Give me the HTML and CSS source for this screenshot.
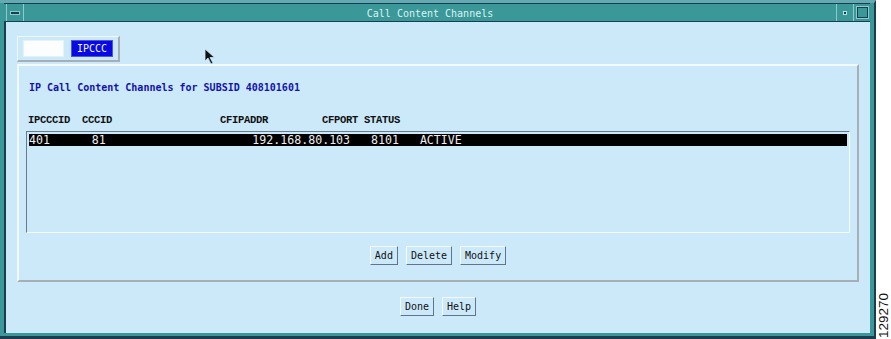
FILE: index.html
```html
<!DOCTYPE html>
<html lang="en">
<head>
    <meta charset="UTF-8">
    <title>Call Content Channels</title>
    <link rel="stylesheet" href="styles.css">
</head>
<body>
    <div class="screen">
        <div class="frame">
            <div class="titlebar">
                <div class="tb-btn menu-btn"><span class="bar"></span></div>
                <div class="title">Call Content Channels</div>
                <div class="tb-btn min-btn"><span class="dot"></span></div>
                <div class="tb-btn max-btn"><span class="box"></span></div>
            </div>
            <div class="client">
                <div class="tabs">
                    <div class="tab blank"></div>
                    <div class="tab active">IPCCC</div>
                </div>
                <div class="panel">
                    <div class="heading">IP Call Content Channels for SUBSID 408101601</div>
                    <pre class="cols">IPCCCID  CCCID                  CFIPADDR         CFPORT STATUS</pre>
                    <div class="list">
                        <pre class="row selected">401      81                     192.168.80.103   8101   ACTIVE</pre>
                    </div>
                    <div class="actions">
                        <button class="btn">Add</button>
                        <button class="btn">Delete</button>
                        <button class="btn">Modify</button>
                    </div>
                </div>
                <div class="actions footer">
                    <button class="btn">Done</button>
                    <button class="btn">Help</button>
                </div>
                <svg class="cursor" width="12" height="18" viewBox="0 0 12 18">
                    <path d="M1 1 L1 13 L4 10 L7 16 L9 15 L6 9.5 L10.5 9.5 Z" fill="#111" stroke="#cce9fa" stroke-width="0.8"/>
                </svg>
            </div>
        </div>
        <div class="figid">129270</div>
    </div>
</body>
</html>
```

FILE: styles.css
```css
body {
    margin: 0;
    background-color: white;
    font-family: "DejaVu Sans Mono", monospace;
}
.screen {
    display: flex;
    width: 891px;
    height: 339px;
}
.frame {
    width: 876px;
    height: 339px;
    flex-shrink: 0;
    box-sizing: border-box;
    background-color: #3a9898;
    border-top: 3px solid #64aab2;
    border-right: 2px solid #1c3d50;
    border-bottom: 3px solid #1c3d50;
    padding: 0 4px 3px 4px;
    display: flex;
    flex-direction: column;
}
.titlebar {
    height: 17px;
    border-top: 1px solid #1c3d50;
    border-bottom: 1px solid #1c3d50;
    display: flex;
    align-items: stretch;
}
.tb-btn {
    width: 16px;
    border-left: 1px solid #8fcaca;
    display: flex;
    align-items: center;
    justify-content: center;
}
.menu-btn {
    margin-left: 2px;
    border-right: 1px solid #8fcaca;
}
.menu-btn .bar {
    width: 8px;
    height: 2px;
    background-color: #1c3d50;
    border: 1px solid #8fcaca;
}
.min-btn .dot {
    width: 2px;
    height: 2px;
    background-color: #1c3d50;
    border: 1px solid #b8e0e0;
}
.max-btn .box {
    width: 9px;
    height: 9px;
    border: 1px solid #1c3d50;
    outline: 1px solid #8fcaca;
}
.title {
    flex: 1;
    text-align: center;
    color: #dcf2f2;
    font-size: 10px;
    line-height: 17px;
    padding-top: 1px;
}
.client {
    position: relative;
    flex: 1;
    background-color: #cce9fa;
    border-left: 2px solid #1c3d50;
    padding: 14px 0 0 11px;
}
.cursor {
    position: absolute;
    left: 198px;
    top: 26px;
}
.tabs {
    display: flex;
    gap: 7px;
    width: fit-content;
    padding: 3px 5px 3px 5px;
    border-top: 1px solid #eef8ff;
    border-left: 1px solid #eef8ff;
    border-bottom: 2px solid #a6aeb6;
    border-right: 2px solid #a6aeb6;
}
.tab {
    height: 17px;
    box-sizing: border-box;
}
.blank {
    width: 41px;
    background-color: #fbfdff;
    border: 1px solid #e4f2fc;
}
.active {
    width: 42px;
    background-color: #0a0ae0;
    border: 1px solid #4a58e8;
    color: #f0f4ff;
    font-size: 10px;
    line-height: 15px;
    text-align: center;
}
.panel {
    width: 842px;
    height: 218px;
    box-sizing: border-box;
    margin-top: 2px;
    padding: 16px 7px 0 7px;
    border-top: 2px solid #f2faff;
    border-left: 2px solid #f2faff;
    border-bottom: 2px solid #a6aeb6;
    border-right: 2px solid #a6aeb6;
}
.heading {
    padding-left: 3px;
    font-size: 10px;
    line-height: 12px;
    font-weight: bold;
    color: #1212b0;
}
.cols {
    margin: 20px 0 0 0;
    padding-left: 2px;
    font-family: "Liberation Mono", monospace;
    font-size: 10.5px;
    letter-spacing: -0.3px;
    line-height: 12px;
    font-weight: bold;
    color: #101010;
}
.list {
    margin-top: 5px;
    height: 102px;
    box-sizing: border-box;
    padding: 2px;
    border-top: 1px solid #687a8c;
    border-left: 1px solid #687a8c;
    border-bottom: 1px solid #f4faff;
    border-right: 1px solid #f4faff;
}
.row {
    margin: 0;
    height: 12px;
    font-size: 11.6px;
    line-height: 12px;
    color: #eeeeee;
}
.selected {
    background-color: black;
}
.actions {
    display: flex;
    justify-content: center;
    gap: 8px;
    margin-top: 13px;
}
.footer {
    width: 842px;
    margin-top: 15px;
}
.btn {
    height: 19px;
    padding: 0 4px;
    font-family: "DejaVu Sans Mono", monospace;
    font-size: 10px;
    line-height: 17px;
    color: #111;
    background-color: #cce9fa;
    border-top: 1px solid #f4faff;
    border-left: 1px solid #f4faff;
    border-bottom: 1px solid #62748a;
    border-right: 1px solid #62748a;
}
.figid {
    align-self: flex-end;
    writing-mode: vertical-rl;
    transform: rotate(180deg);
    margin: 0 0 1px 1px;
    font-family: "Liberation Sans", Arial, sans-serif;
    font-size: 13.5px;
    line-height: 14px;
    color: #111;
}
```
